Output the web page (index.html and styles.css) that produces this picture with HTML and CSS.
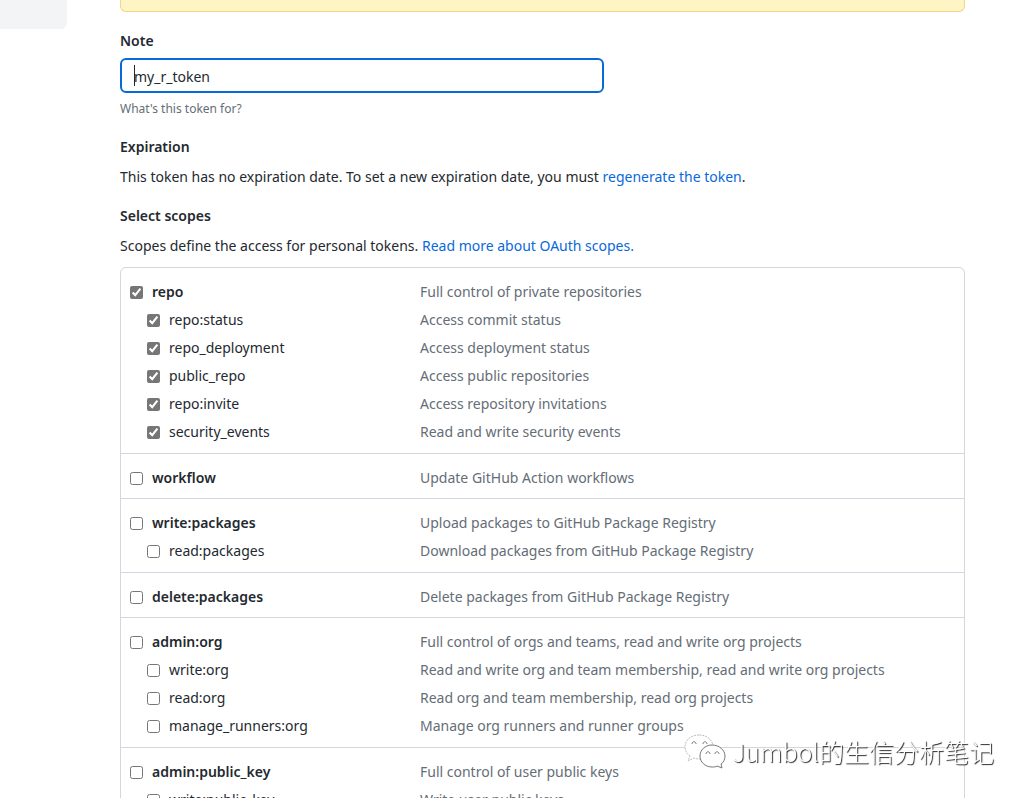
FILE: index.html
```html
<!DOCTYPE html>
<html lang="en">
<head>
  <meta charset="UTF-8">
  <title>Edit personal access token</title>
  <meta name="viewport" content="width=device-width, initial-scale=1.0">
  <link rel="stylesheet" href="styles.css">
</head>
<body>
  <div class="layout">
    <aside class="sidebar">
      <div class="sidebar-menu"></div>
    </aside>

    <main class="content">
      <div class="flash-warn"></div>

      <form class="token-form">
        <label class="form-title" for="token-note">Note</label>
        <div class="note-field">
          <input type="text" id="token-note" class="note-input" value="my_r_token">
        </div>
        <p class="note-hint">What's this token for?</p>

        <h2 class="form-title">Expiration</h2>
        <p class="form-text">This token has no expiration date. To set a new expiration date, you must <a href="#">regenerate the token</a>.</p>

        <h2 class="form-title">Select scopes</h2>
        <p class="form-text">Scopes define the access for personal tokens. <a href="#">Read more about OAuth scopes.</a></p>

        <ul class="scopes">
          <li class="scope-group">
            <div class="scope">
              <label class="scope-name"><input type="checkbox" checked> repo</label>
              <span class="scope-desc">Full control of private repositories</span>
            </div>
            <ul class="sub-scopes">
              <li class="scope">
                <label class="scope-name"><input type="checkbox" checked> repo:status</label>
                <span class="scope-desc">Access commit status</span>
              </li>
              <li class="scope">
                <label class="scope-name"><input type="checkbox" checked> repo_deployment</label>
                <span class="scope-desc">Access deployment status</span>
              </li>
              <li class="scope">
                <label class="scope-name"><input type="checkbox" checked> public_repo</label>
                <span class="scope-desc">Access public repositories</span>
              </li>
              <li class="scope">
                <label class="scope-name"><input type="checkbox" checked> repo:invite</label>
                <span class="scope-desc">Access repository invitations</span>
              </li>
              <li class="scope">
                <label class="scope-name"><input type="checkbox" checked> security_events</label>
                <span class="scope-desc">Read and write security events</span>
              </li>
            </ul>
          </li>

          <li class="scope-group">
            <div class="scope">
              <label class="scope-name"><input type="checkbox"> workflow</label>
              <span class="scope-desc">Update GitHub Action workflows</span>
            </div>
          </li>

          <li class="scope-group">
            <div class="scope">
              <label class="scope-name"><input type="checkbox"> write:packages</label>
              <span class="scope-desc">Upload packages to GitHub Package Registry</span>
            </div>
            <ul class="sub-scopes">
              <li class="scope">
                <label class="scope-name"><input type="checkbox"> read:packages</label>
                <span class="scope-desc">Download packages from GitHub Package Registry</span>
              </li>
            </ul>
          </li>

          <li class="scope-group">
            <div class="scope">
              <label class="scope-name"><input type="checkbox"> delete:packages</label>
              <span class="scope-desc">Delete packages from GitHub Package Registry</span>
            </div>
          </li>

          <li class="scope-group">
            <div class="scope">
              <label class="scope-name"><input type="checkbox"> admin:org</label>
              <span class="scope-desc">Full control of orgs and teams, read and write org projects</span>
            </div>
            <ul class="sub-scopes">
              <li class="scope">
                <label class="scope-name"><input type="checkbox"> write:org</label>
                <span class="scope-desc">Read and write org and team membership, read and write org projects</span>
              </li>
              <li class="scope">
                <label class="scope-name"><input type="checkbox"> read:org</label>
                <span class="scope-desc">Read org and team membership, read org projects</span>
              </li>
              <li class="scope">
                <label class="scope-name"><input type="checkbox"> manage_runners:org</label>
                <span class="scope-desc">Manage org runners and runner groups</span>
              </li>
            </ul>
          </li>

          <li class="scope-group">
            <div class="scope">
              <label class="scope-name"><input type="checkbox"> admin:public_key</label>
              <span class="scope-desc">Full control of user public keys</span>
            </div>
            <ul class="sub-scopes">
              <li class="scope">
                <label class="scope-name"><input type="checkbox"> write:public_key</label>
                <span class="scope-desc">Write user public keys</span>
              </li>
            </ul>
          </li>
        </ul>
      </form>
    </main>
  </div>

  <div class="watermark">
    <svg class="watermark-icon" viewBox="0 0 42 36" aria-hidden="true">
      <path class="bubble-back" d="M15 2C7 2 1 7 1 14c0 4 2 7 5 9l-2 5 6-3c2 1 4 1 6 1 7 0 13-5 13-12S23 2 15 2z"/>
      <path class="bubble-front" d="M28 12c-7 0-12 5-12 11s5 11 12 11c2 0 4 0 5-1l5 2-1-4c3-2 4-5 4-8 0-6-6-11-13-11z"/>
      <path class="eyes" d="M8 11v-1q2-3 4 0v1M19 11v-1q2-3 4 0v1M22 21v-1q2-3 4 0v1M31 21v-1q2-3 4 0v1"/>
    </svg>
    <span>Jumbol的生信分析笔记</span>
  </div>
</body>
</html>
```
FILE: styles.css
```css
html, body {
  margin: 0;
  padding: 0;
  height: 100%;
  overflow: hidden;
  background: #fff;
  color: #24292f;
  font-family: "Noto Sans", "Noto Sans CJK SC", sans-serif;
  font-size: 14px;
  line-height: 20px;
}
ul, p, h2 {
  margin: 0;
  padding: 0;
}
ul {
  list-style: none;
}
a {
  color: #0969da;
  text-decoration: none;
}
a:hover {
  text-decoration: underline;
}
.layout {
  display: flex;
  gap: 53px;
  padding-right: 63px;
}
.sidebar {
  flex: 0 0 67px;
}
.sidebar-menu {
  height: 29px;
  background: #f3f4f6;
  border-bottom-right-radius: 6px;
}
.content {
  flex: 1;
  min-width: 0;
}
.flash-warn {
  height: 11px;
  background: #fff5c4;
  border: 1px solid #eed888;
  border-top: none;
  border-radius: 0 0 6px 6px;
}

/* form */
.token-form {
  padding-top: 19px;
}
.form-title {
  display: block;
  font-size: 14px;
  font-weight: 600;
}
.note-field {
  position: relative;
  width: 484px;
  max-width: 100%;
  margin: 7px 0 6px;
}
.note-input {
  display: block;
  box-sizing: border-box;
  width: 100%;
  height: 35px;
  padding: 1px 12px 0;
  border: 2px solid #0969da;
  border-radius: 6px;
  outline: none;
  background: #fff;
  color: #24292f;
  font: inherit;
  caret-color: transparent;
}
/* text cursor */
.note-field::after {
  content: "";
  position: absolute;
  left: 14px;
  top: 7px;
  width: 1px;
  height: 21px;
  background: #24292f;
}
.note-hint {
  margin-bottom: 18px;
  color: #656d76;
  font-size: 12px;
}
.form-text {
  margin: 10px 0 19px;
}

/* scopes */
.scopes {
  margin-top: -8px;
  border: 1px solid #d0d7de;
  border-radius: 6px;
}
.scope-group {
  padding: 10px 9px 6px;
}
.scope-group + .scope-group {
  border-top: 1px solid #d0d7de;
}
.scope {
  display: flex;
  line-height: 28px;
}
.scope-name {
  display: flex;
  align-items: center;
  gap: 9px;
  box-sizing: border-box;
  flex: 0 0 290px;
  font-weight: 600;
}
.scope-name input {
  width: 13px;
  height: 13px;
  margin: 0;
  accent-color: #767676;
}
.scope-desc {
  color: #656d76;
}
.sub-scopes {
  padding-bottom: 1px;
}
.sub-scopes .scope-name {
  padding-left: 17px;
  font-weight: 400;
}

/* watermark */
.watermark {
  position: fixed;
  right: 34px;
  bottom: 29px;
  display: flex;
  align-items: center;
  gap: 6px;
  color: #fff;
  font-family: "Noto Sans CJK SC", sans-serif;
  font-size: 25px;
  font-weight: 300;
  line-height: 36px;
  white-space: nowrap;
  text-shadow: 1px 1px 1px #222;
}
.watermark-icon {
  width: 42px;
  height: 36px;
  fill: #fff;
}
.bubble-back {
  stroke: #bbb;
  stroke-dasharray: 2 1;
}
.bubble-front {
  stroke: #777;
}
.eyes {
  fill: none;
  stroke: #888;
}
```
